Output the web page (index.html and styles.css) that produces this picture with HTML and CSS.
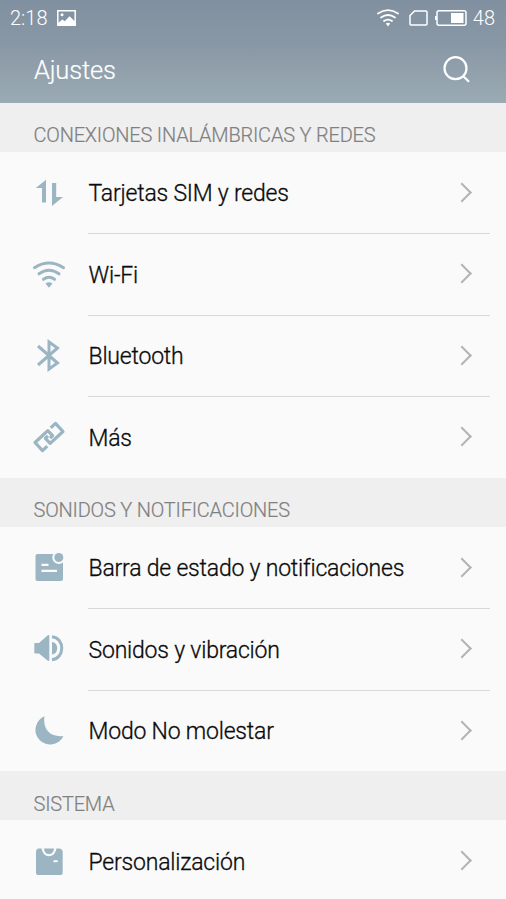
FILE: index.html
```html
<!DOCTYPE html>
<html lang="es">
<head>
<meta charset="utf-8">
<title>Ajustes</title>
<link rel="stylesheet" href="styles.css">
</head>
<body>
<header class="top">
  <div class="status">
    <span class="clock">2:18</span>
    <svg class="picture" width="19" height="16" viewBox="0 0 19 16"><path d="M.8.8h17.4v14.4H.8z" fill="none" stroke="#fff" stroke-width="1.5"/><circle cx="5" cy="4.8" r="1.5" fill="#fff"/><path d="M1 14v-1l4.3-3.4 2.5 1.6 4.7-5L18 11.5V15H1z" fill="#fff"/></svg>
    <span class="spacer"></span>
    <svg class="wifi" width="22" height="18" viewBox="0 0 22 18"><g fill="none" stroke="#fff" stroke-width="1.8" stroke-linecap="round"><path d="M1 4.5Q11-2.4 21 4.5"/><path d="M4 8.5q7-5 14 0"/><path d="M7 12q4-2.800 8 0"/></g><path d="M8.800 14.400q2.200-1.200 4.400 0L11 17.500z" fill="#fff"/></svg>
    <svg class="sim" width="19" height="16" viewBox="0 0 19 16"><path d="M5.500 1H17q1 0 1 1v12q0 1-1 1H2q-1 0-1-1V5.500z" fill="none" stroke="#fff" stroke-width="1.500"/></svg>
    <svg class="battery" width="32" height="16" viewBox="0 0 32 16"><rect x="2" y=".8" width="29" height="14.400" rx="2" fill="none" stroke="#fff" stroke-width="1.500"/><path d="M0 6h2v4H0zM16 3h12.500v10H16z" fill="#fff"/></svg>
    <span class="charge">48</span>
  </div>
  <div class="titlebar">
    <h1>Ajustes</h1>
    <svg width="28" height="28" viewBox="0 0 28 28"><g fill="none" stroke="#fff" stroke-width="2.200"><circle cx="12.500" cy="12.200" r="11"/><path d="M20 20l6 5.800"/></g></svg>
  </div>
</header>
<main>
  <section>
    <h2>CONEXIONES INALÁMBRICAS Y REDES</h2>
    <a class="row"><svg class="icon" viewBox="0 0 34 34"><path d="M14 3.700V26.500H10V12H3.800zM20 7h4.200v14H31L20 30z"/></svg><span>Tarjetas SIM y redes</span><i class="chevron"></i></a>
    <a class="row"><svg class="icon" viewBox="0 0 34 34"><g class="line wave"><path d="M2.500 10.700Q17 1.500 31.500 10.700"/><path d="M7 16.800q10-7 20 0"/><path d="M11.500 22.300q5.500-4.200 11 0"/></g><path d="M13.500 26.500q3.500-2.400 7 0L17 30.700z"/></svg><span>Wi-Fi</span><i class="chevron"></i></a>
    <a class="row"><svg class="icon" viewBox="0 0 34 34"><path class="line" d="M6 7L25.500 24 17 30V3l8.500 6L6 26"/></svg><span>Bluetooth</span><i class="chevron"></i></a>
    <a class="row"><svg class="icon" viewBox="0 0 34 34"><g class="line link" transform="translate(17 17) rotate(-43)"><path d="M-7.500 5.500H-14V-5.500H3.500V1.500H0"/><path d="M7.500 -5.500H14V5.500H-3.500V-1.500H0"/></g></svg><span>Más</span><i class="chevron"></i></a>
  </section>
  <section>
    <h2>SONIDOS Y NOTIFICACIONES</h2>
    <a class="row"><svg class="icon" viewBox="0 0 34 34"><rect x="3.500" y="3" width="27.500" height="27" rx="2"/><circle class="paper" cx="26.800" cy="6.500" r="6.500"/><circle cx="26.800" cy="6.500" r="4.500"/><path class="paper" d="M9.500 12.700h7v2.300h-7zM9.500 18.700h15.500v2.300h-15.500z"/></svg><span>Barra de estado y notificaciones</span><i class="chevron"></i></a>
    <a class="row"><svg class="icon" viewBox="0 0 34 34"><path d="M3.300 11H7L15.500 3.500q1.800-1 1.800.5v24q0 1.800-1.800.6L7 21.500H3.300q-1 0-1-1v-8.500q0-1 1-1zM20 10c7 .5 7 12 0 12.500z"/><path class="line" d="M20 4.700c13 1 13 21.800 0 23"/></svg><span>Sonidos y vibración</span><i class="chevron"></i></a>
    <a class="row"><svg class="icon" viewBox="0 0 34 34"><path d="M12.500 2.300C10.500 15.500 18 23.500 31.500 22A14.700 14.700 0 1 1 12.500 2.300z"/></svg><span>Modo No molestar</span><i class="chevron"></i></a>
  </section>
  <section>
    <h2>SISTEMA</h2>
    <a class="row"><svg class="icon" viewBox="0 0 34 34"><path d="M6 4.500h22q2.700 1 2.700 3V29q0 2-2 2H6q-2 0-2-2V7.500q0-2 2-3z"/><path class="collar" d="M10.700 4c.8 9.500 11.800 9.500 12.600 0"/><path class="paper" d="M21.500 16.200h4.200v2h-4.200z"/></svg><span>Personalización</span><i class="chevron"></i></a>
  </section>
</main>
</body>
</html>
```
FILE: styles.css
```css
* { box-sizing: border-box; }
html { overflow: hidden; height: 100%; }
body {
  margin: 0;
  height: 899px;
  overflow: hidden;
  background: #fafafa;
  color: #0a0a0a;
  font-family: Roboto, "Liberation Sans", sans-serif;
}
.top {
  height: 102.5px;
  background: linear-gradient(#8190a0, #8998a5 45%, #9babb4);
  color: #fff;
}
.status {
  display: flex;
  align-items: center;
  height: 35px;
  padding: 0 11px 0 10px;
  font-size: 20px;
  font-weight: 300;
}
.picture { margin-left: 10px; }
.spacer { flex: 1; }
.sim { margin-left: 10px; }
.battery { margin: 0 6px 0 7px; }
.titlebar {
  display: flex;
  align-items: center;
  justify-content: space-between;
  height: 67px;
  padding: 2px 35px 0 34px;
}
h1, h2 { margin: 0; font-weight: 300; }
h1 {
  font-size: 25.500px;
  letter-spacing: -.2px;
  -webkit-text-stroke: .2px;
}
h2 {
  height: 49px;
  padding: 8.500px 0 0 33.500px;
  background: #efefef;
  color: #808080;
  font-size: 20px;
  letter-spacing: -.2px;
  line-height: 49px;
  -webkit-text-stroke: .2px;
}
.row {
  display: grid;
  grid-template-columns: 34px 1fr 14px;
  column-gap: 22.500px;
  align-items: center;
  height: 81.500px;
  padding: 1px 33px 0 32px;
  background: linear-gradient(#d9d9d9, #d9d9d9) 88px 0 / 402px 1px no-repeat;
  font-size: 23px;
  font-weight: 300;
  letter-spacing: -.2px;
}
h2 + .row { background: none; }
.row span {
  padding-top: 2px;
  white-space: nowrap;
  -webkit-text-stroke: .3px;
}
.icon { width: 34px; height: 34px; fill: #9bb5c3; }
.line { fill: none; stroke: #9bb5c3; stroke-width: 3; }
.wave { stroke-linecap: round; }
.link { stroke-width: 3.200; stroke-linejoin: round; }
.paper { fill: #fafafa; }
.collar { fill: none; stroke: #fafafa; stroke-width: 2.400; }
.chevron {
  width: 14px;
  height: 14px;
  border: solid #b3b3b3;
  border-width: 2px 2px 0 0;
  transform: translate(-4px, -.5px) rotate(45deg);
}
```
